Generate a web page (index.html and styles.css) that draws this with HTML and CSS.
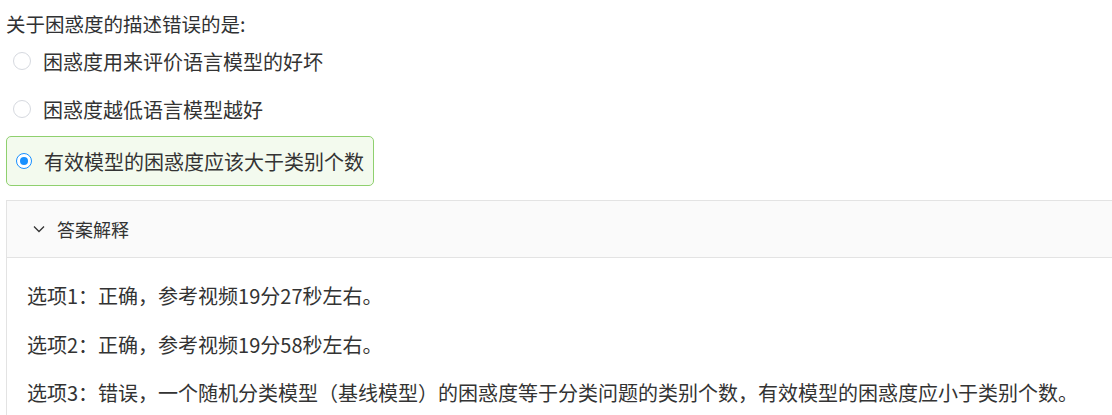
FILE: index.html
```html
<!DOCTYPE html>
<html lang="zh-CN">
<head>
    <meta charset="UTF-8">
    <meta name="viewport" content="width=device-width, initial-scale=1.0">
    <title>练习题</title>
    <link rel="stylesheet" href="styles.css">
</head>
<body>
    <div class="question">
        <div class="question-title">关于困惑度的描述错误的是:</div>
        <div class="options">
            <label class="option">
                <span class="radio"></span>
                <span class="option-text">困惑度用来评价语言模型的好坏</span>
            </label>
            <label class="option">
                <span class="radio"></span>
                <span class="option-text">困惑度越低语言模型越好</span>
            </label>
            <label class="option option-checked">
                <span class="radio radio-checked"></span>
                <span class="option-text">有效模型的困惑度应该大于类别个数</span>
            </label>
        </div>
        <div class="collapse">
            <div class="collapse-header">
                <svg class="collapse-arrow" width="12" height="12" viewBox="0 0 12 12">
                    <path d="M1 3.5 L6 8.5 L11 3.5" fill="none" stroke="#333" stroke-width="1.3"/>
                </svg>
                <span>答案解释</span>
            </div>
            <div class="collapse-body">
                <p>选项1：正确，参考视频19分27秒左右。</p>
                <p>选项2：正确，参考视频19分58秒左右。</p>
                <p>选项3：错误，一个随机分类模型（基线模型）的困惑度等于分类问题的类别个数，有效模型的困惑度应小于类别个数。</p>
            </div>
        </div>
    </div>
</body>
</html>
```

FILE: styles.css
```css
body {
    margin: 0;
    padding: 0;
    overflow: hidden;
    background: #fff;
    color: #333;
    font-family: "Noto Sans CJK SC", "Microsoft YaHei", sans-serif;
}
.question {
    padding: 0 0 0 6px;
}
.question-title {
    padding-top: 10px;
    font-size: 19.5px;
    line-height: 27px;
    color: #303133;
}
.options {
    display: flex;
    flex-direction: column;
    width: 368px;
}
.option {
    display: flex;
    align-items: center;
    gap: 12px;
    box-sizing: border-box;
    height: 48px;
    padding-left: 6px;
    border: 1px solid transparent;
    border-radius: 5px;
    font-size: 20px;
    cursor: pointer;
}
.option-checked {
    height: 50px;
    margin-top: 3px;
    padding-left: 9px;
    border-color: #8fd06e;
    background: #f3faee;
}
.radio {
    box-sizing: border-box;
    width: 18px;
    height: 18px;
    border: 1px solid #d6d9df;
    border-radius: 50%;
    background: #fff;
}
.radio-checked {
    position: relative;
    width: 16px;
    height: 16px;
    border-color: #1890ff;
}
.radio-checked::after {
    content: "";
    position: absolute;
    left: 3px;
    top: 3px;
    width: 8px;
    height: 8px;
    border-radius: 50%;
    background: #1890ff;
}
.collapse {
    margin-top: 14px;
    margin-right: -10px;
    border: 1px solid #e3e3e3;
}
.collapse-header {
    display: flex;
    align-items: center;
    height: 56px;
    padding-left: 26px;
    gap: 12px;
    background: #fafafa;
    border-bottom: 1px solid #e3e3e3;
    font-size: 18px;
    color: #333;
}
.collapse-body {
    padding: 24px 20px 10px;
    font-size: 20px;
    line-height: 28px;
}
.collapse-body p {
    margin: 0 0 20.5px;
}
```
